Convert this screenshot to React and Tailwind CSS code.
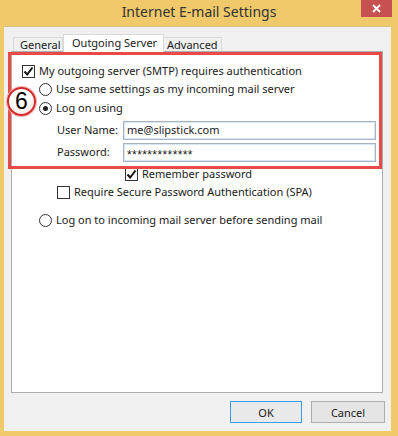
import React from 'react';

const font = { fontFamily: '"Noto Sans", "Open Sans", sans-serif' };

function CheckBox({ checked }) {
  return (
    <span className="w-[13px] h-[13px] shrink-0 border border-[#333] bg-white flex items-center justify-center">
      {checked && (
        <svg width="11" height="11" viewBox="0 0 11 11">
          <path d="M1.5 5.5 L4.2 8.5 L9.5 1.5" fill="none" stroke="#111" strokeWidth="2" />
        </svg>
      )}
    </span>
  );
}

function Radio({ checked }) {
  return (
    <span className="w-[13px] h-[13px] shrink-0 rounded-full border border-[#333] bg-white flex items-center justify-center">
      {checked && <span className="w-[5px] h-[5px] rounded-full bg-[#222]" />}
    </span>
  );
}

function Row({ className = '', children }) {
  return <div className={`h-[18px] flex items-center gap-[4px] whitespace-nowrap ${className}`}>{children}</div>;
}

function Field({ label, children, className = '' }) {
  return (
    <div className={`flex items-center whitespace-nowrap ${className}`}>
      <span className="w-[66px] pl-[45px] box-content">{label}</span>
      <div className="w-[253px] h-[19px] border border-[#aab2bf] bg-white shadow-[inset_0_0_0_1px_#d6e8f8] flex items-center px-[3px]">
        {children}
      </div>
    </div>
  );
}

export default function App() {
  return (
    <div className="w-[398px] h-[436px] bg-[#f0c96b] flex flex-col text-[11px] text-[#1a1a1a]" style={font}>
      {/* Title bar */}
      <div className="h-[26px] relative flex items-center justify-center">
        <span className="text-[14px] text-[#333] leading-none -mt-[2px]">Internet E-mail Settings</span>
        <button className="absolute right-[6px] top-0 w-[31px] h-[17px] bg-[#c75050] flex items-center justify-center">
          <svg width="9" height="9" viewBox="0 0 9 9">
            <path d="M1 1 L8 8 M8 1 L1 8" stroke="#fff" strokeWidth="1.8" />
          </svg>
        </button>
      </div>

      {/* Client area */}
      <div className="ml-[4px] mr-[7px] h-[405px] bg-[#f0f0f0] border-t border-[#d9c08a] flex flex-col relative">
        {/* Tabs */}
        <div className="flex items-end pl-[9px] mt-[6px] h-[18px] whitespace-nowrap">
          <div className="w-[50px] h-[14px] border border-b-0 border-[#d9d9d9] bg-[#f0f0f0] flex items-center pl-[6px] leading-none">General</div>
          <div className="w-[101px] h-[18px] border border-b-0 border-[#d9d9d9] bg-white flex items-center pl-[8px] leading-none relative z-10 -mb-px pb-[2px]">Outgoing Server</div>
          <div className="w-[58px] h-[14px] border border-b-0 border-l-0 border-[#d9d9d9] bg-[#f0f0f0] flex items-center pl-[3px] leading-none">Advanced</div>
        </div>

        {/* Panel */}
        <div className="ml-[7px] w-[372px] h-[342px] border border-[#adadad] bg-white flex flex-col">
          <Row className="mt-[10px] pl-[10px]">
            <CheckBox checked />
            <span>My outgoing server (SMTP) requires authentication</span>
          </Row>
          <Row className="pl-[27px]">
            <Radio />
            <span>Use same settings as my incoming mail server</span>
          </Row>
          <Row className="mt-[1px] pl-[27px]">
            <Radio checked />
            <span>Log on using</span>
          </Row>
          <Field className="mt-[4px]" label="User Name:">me@slipstick.com</Field>
          <Field className="mt-[3px]" label="Password:">
            <span className="text-[12px] leading-none pt-[5px] tracking-[0.4px]" style={{ fontFamily: '"Liberation Sans", Arial, sans-serif' }}>*************</span>
          </Field>
          <Row className="mt-[3px] pl-[113px]">
            <CheckBox checked />
            <span>Remember password</span>
          </Row>
          <Row className="pl-[45px]">
            <CheckBox />
            <span>Require Secure Password Authentication (SPA)</span>
          </Row>
          <Row className="mt-[10px] pl-[27px]">
            <Radio />
            <span>Log on to incoming mail server before sending mail</span>
          </Row>
        </div>

        {/* Buttons */}
        <div className="flex justify-end gap-[9px] pr-[6px] mt-[8px]">
          <button className="w-[72px] h-[22px] border border-[#3c9fe6] bg-[#e9e9e9] leading-none">OK</button>
          <button className="w-[74px] h-[22px] border border-[#adadad] bg-[#e5e5e5] leading-none">Cancel</button>
        </div>

        {/* Annotation overlay */}
        <div className="absolute left-[4px] top-[25px] w-[374px] h-[117px] border-[3px] border-[#e84a48] pointer-events-none" />
        <div className="absolute left-[3px] top-[60px] w-[29px] h-[29px] rounded-full border-2 border-[#d42a2a] bg-[radial-gradient(circle_at_40%_35%,#ffffff_45%,#f2d4d4_100%)] shadow-[0_0_0_1px_#f6b0b0] flex items-center justify-center">
          <span className="text-[23px] leading-none text-black" style={{ fontFamily: '"Liberation Sans", Arial, sans-serif' }}>6</span>
        </div>
      </div>
    </div>
  );
}
